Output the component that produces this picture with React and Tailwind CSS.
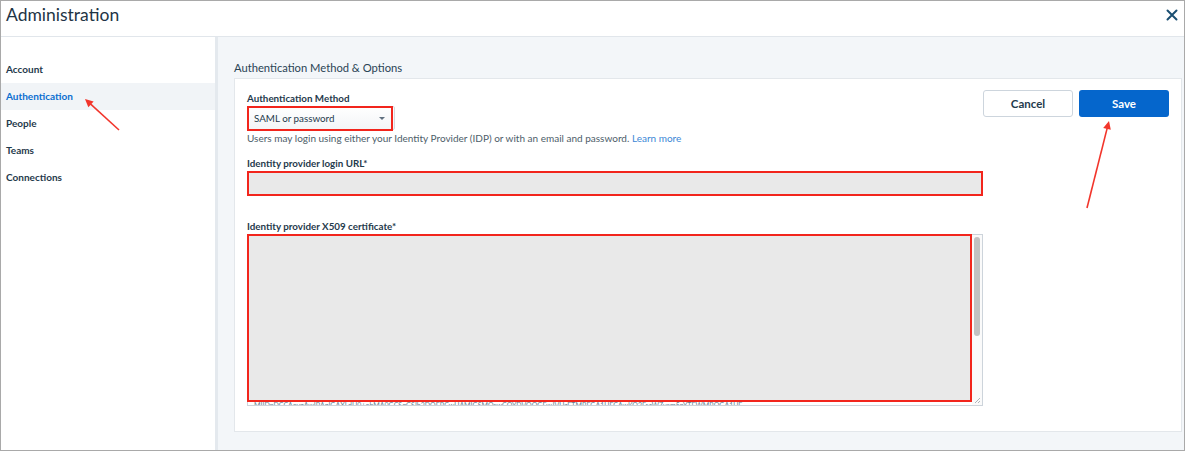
import React from 'react';

const navItems = ['Account', 'Authentication', 'People', 'Teams', 'Connections'];

const Arrow = ({ x1, y1, x2, y2 }) => {
  const a = Math.atan2(y2 - y1, x2 - x1);
  const len = 9;
  const w = 0.45;
  const p1 = [x2 - len * Math.cos(a - w), y2 - len * Math.sin(a - w)];
  const p2 = [x2 - len * Math.cos(a + w), y2 - len * Math.sin(a + w)];
  return (
    <g>
      <line x1={x1} y1={y1} x2={x2 - 4 * Math.cos(a)} y2={y2 - 4 * Math.sin(a)} stroke="#f2352b" strokeWidth="1.6" />
      <polygon points={`${x2},${y2} ${p1[0]},${p1[1]} ${p2[0]},${p2[1]}`} fill="#f2352b" />
    </g>
  );
};

export default function App() {
  return (
    <div
      className="relative w-[1185px] h-[451px] flex flex-col bg-white border border-[#a9a9a9] text-[#1f3a4c] overflow-hidden"
      style={{ fontFamily: 'Lato, "Open Sans", sans-serif' }}
    >
      {/* header */}
      <div className="h-[36px] shrink-0 flex items-start justify-between pl-[5px] pr-[6px] pt-[4px] border-b border-[#e1e6eb]">
        <h1 className="text-[17.5px] leading-[20px] text-[#1e3445]">Administration</h1>
        <svg className="mt-[4px]" width="12" height="12" viewBox="0 0 12 12">
          <path d="M1.5 1.5 L10.5 10.5 M10.5 1.5 L1.5 10.5" stroke="#1b4f72" strokeWidth="2" strokeLinecap="round" />
        </svg>
      </div>

      <div className="flex flex-1 min-h-0">
        {/* sidebar */}
        <div className="w-[217px] shrink-0 border-r-[3px] border-[#e4e9ee] pt-[19px]">
          {navItems.map((item) => (
            <div
              key={item}
              className={`h-[27px] flex items-center pl-[5px] text-[10px] font-bold ${
                item === 'Authentication' ? 'bg-[#f1f4f7] text-[#0b6fd0]' : 'text-[#1f3a4c]'
              }`}
            >
              {item}
            </div>
          ))}
        </div>

        {/* main */}
        <div className="flex-1 bg-[#f3f6f9] pl-[16px] pr-[2px] pt-[23px] pb-[18px] flex flex-col">
          <div className="text-[11.2px] leading-[15px] mb-[3px] text-[#2a4455]">Authentication Method &amp; Options</div>
          <div className="flex-1 bg-white border border-[#e3e7eb] flex pl-[12px] pr-[12px]">
            <div className="w-[736px] pt-[12px]">
              <div className="text-[9.8px] font-bold leading-[14px] mb-[1px]">Authentication Method</div>
              <div className="relative w-[148px] h-[24px] border border-[#d3d9df] rounded-[2px] bg-gradient-to-b from-white to-[#f3f5f7] flex items-center justify-between pl-[6px] pr-[9px]">
                <span className="text-[9.8px]">SAML or password</span>
                <span className="w-0 h-0 border-l-[3px] border-r-[3px] border-t-[3px] border-l-transparent border-r-transparent border-t-[#607080]" />
                <div className="absolute left-[-1px] top-[-1px] w-[146px] h-[25px] border-2 border-[#f2251c]" />
              </div>
              <div className="text-[10px] leading-[14px] mt-[1px] text-[#4d5d69]">
                Users may login using either your Identity Provider (IDP) or with an email and password.{' '}
                <span className="text-[#3b87d6]">Learn more</span>
              </div>
              <div className="text-[9.8px] font-bold leading-[14px] mt-[11px] mb-[1px]">Identity provider login URL*</div>
              <div className="h-[25px] bg-[#e9e9e9] border-2 border-[#f2251c]" />
              <div className="text-[9.8px] font-bold leading-[14px] mt-[23px] mb-[1px]">Identity provider X509 certificate*</div>
              <div className="relative h-[172px] border border-[#cdd4db] flex">
                <div className="flex-1 flex flex-col">
                  <div className="h-[169px] bg-[#e9e9e9] border-2 border-[#f2251c] ml-[-1px] mt-[-1px]" />
                  <div className="h-[3px] overflow-hidden text-[7px] leading-[6px] text-[#6a7f90] pl-[6px] whitespace-nowrap">
                    MIIDpDCCAoygAwIBAgIGAXLdH0+ohMA0GCSqGSIb3DQEBCwUAMIGSMQswCQYDVQQGEwJVUzETMBEGA1UECAwKQ2FsaWZvcm5pYTEWMBQGA1UE
                  </div>
                </div>
                <div className="w-[10px] flex flex-col items-center pt-[2px] bg-[#fafafa]">
                  <div className="w-[6px] h-[99px] rounded-full bg-[#c1c1c1]" />
                </div>
                <svg className="absolute right-[1px] bottom-[1px]" width="7" height="7" viewBox="0 0 7 7">
                  <path d="M1 6 L6 1 M4 6 L6 4" stroke="#9aa3ab" strokeWidth="0.8" />
                </svg>
              </div>
            </div>
            <div className="flex-1 flex justify-end gap-[6px] pt-[11px]">
              <button className="w-[90px] h-[27px] border border-[#cdd5dd] rounded-[3px] bg-white text-[11.5px] font-bold text-[#1f3a4c]">
                Cancel
              </button>
              <button className="w-[90px] h-[27px] rounded-[3px] bg-[#0566cc] text-[11.5px] font-bold text-white">
                Save
              </button>
            </div>
          </div>
        </div>
      </div>

      {/* annotation arrows */}
      <svg className="absolute left-0 top-0 pointer-events-none" width="1185" height="451">
        <Arrow x1={118} y1={129} x2={84} y2={98} />
        <Arrow x1={1086} y1={207} x2={1108} y2={120} />
      </svg>
    </div>
  );
}
